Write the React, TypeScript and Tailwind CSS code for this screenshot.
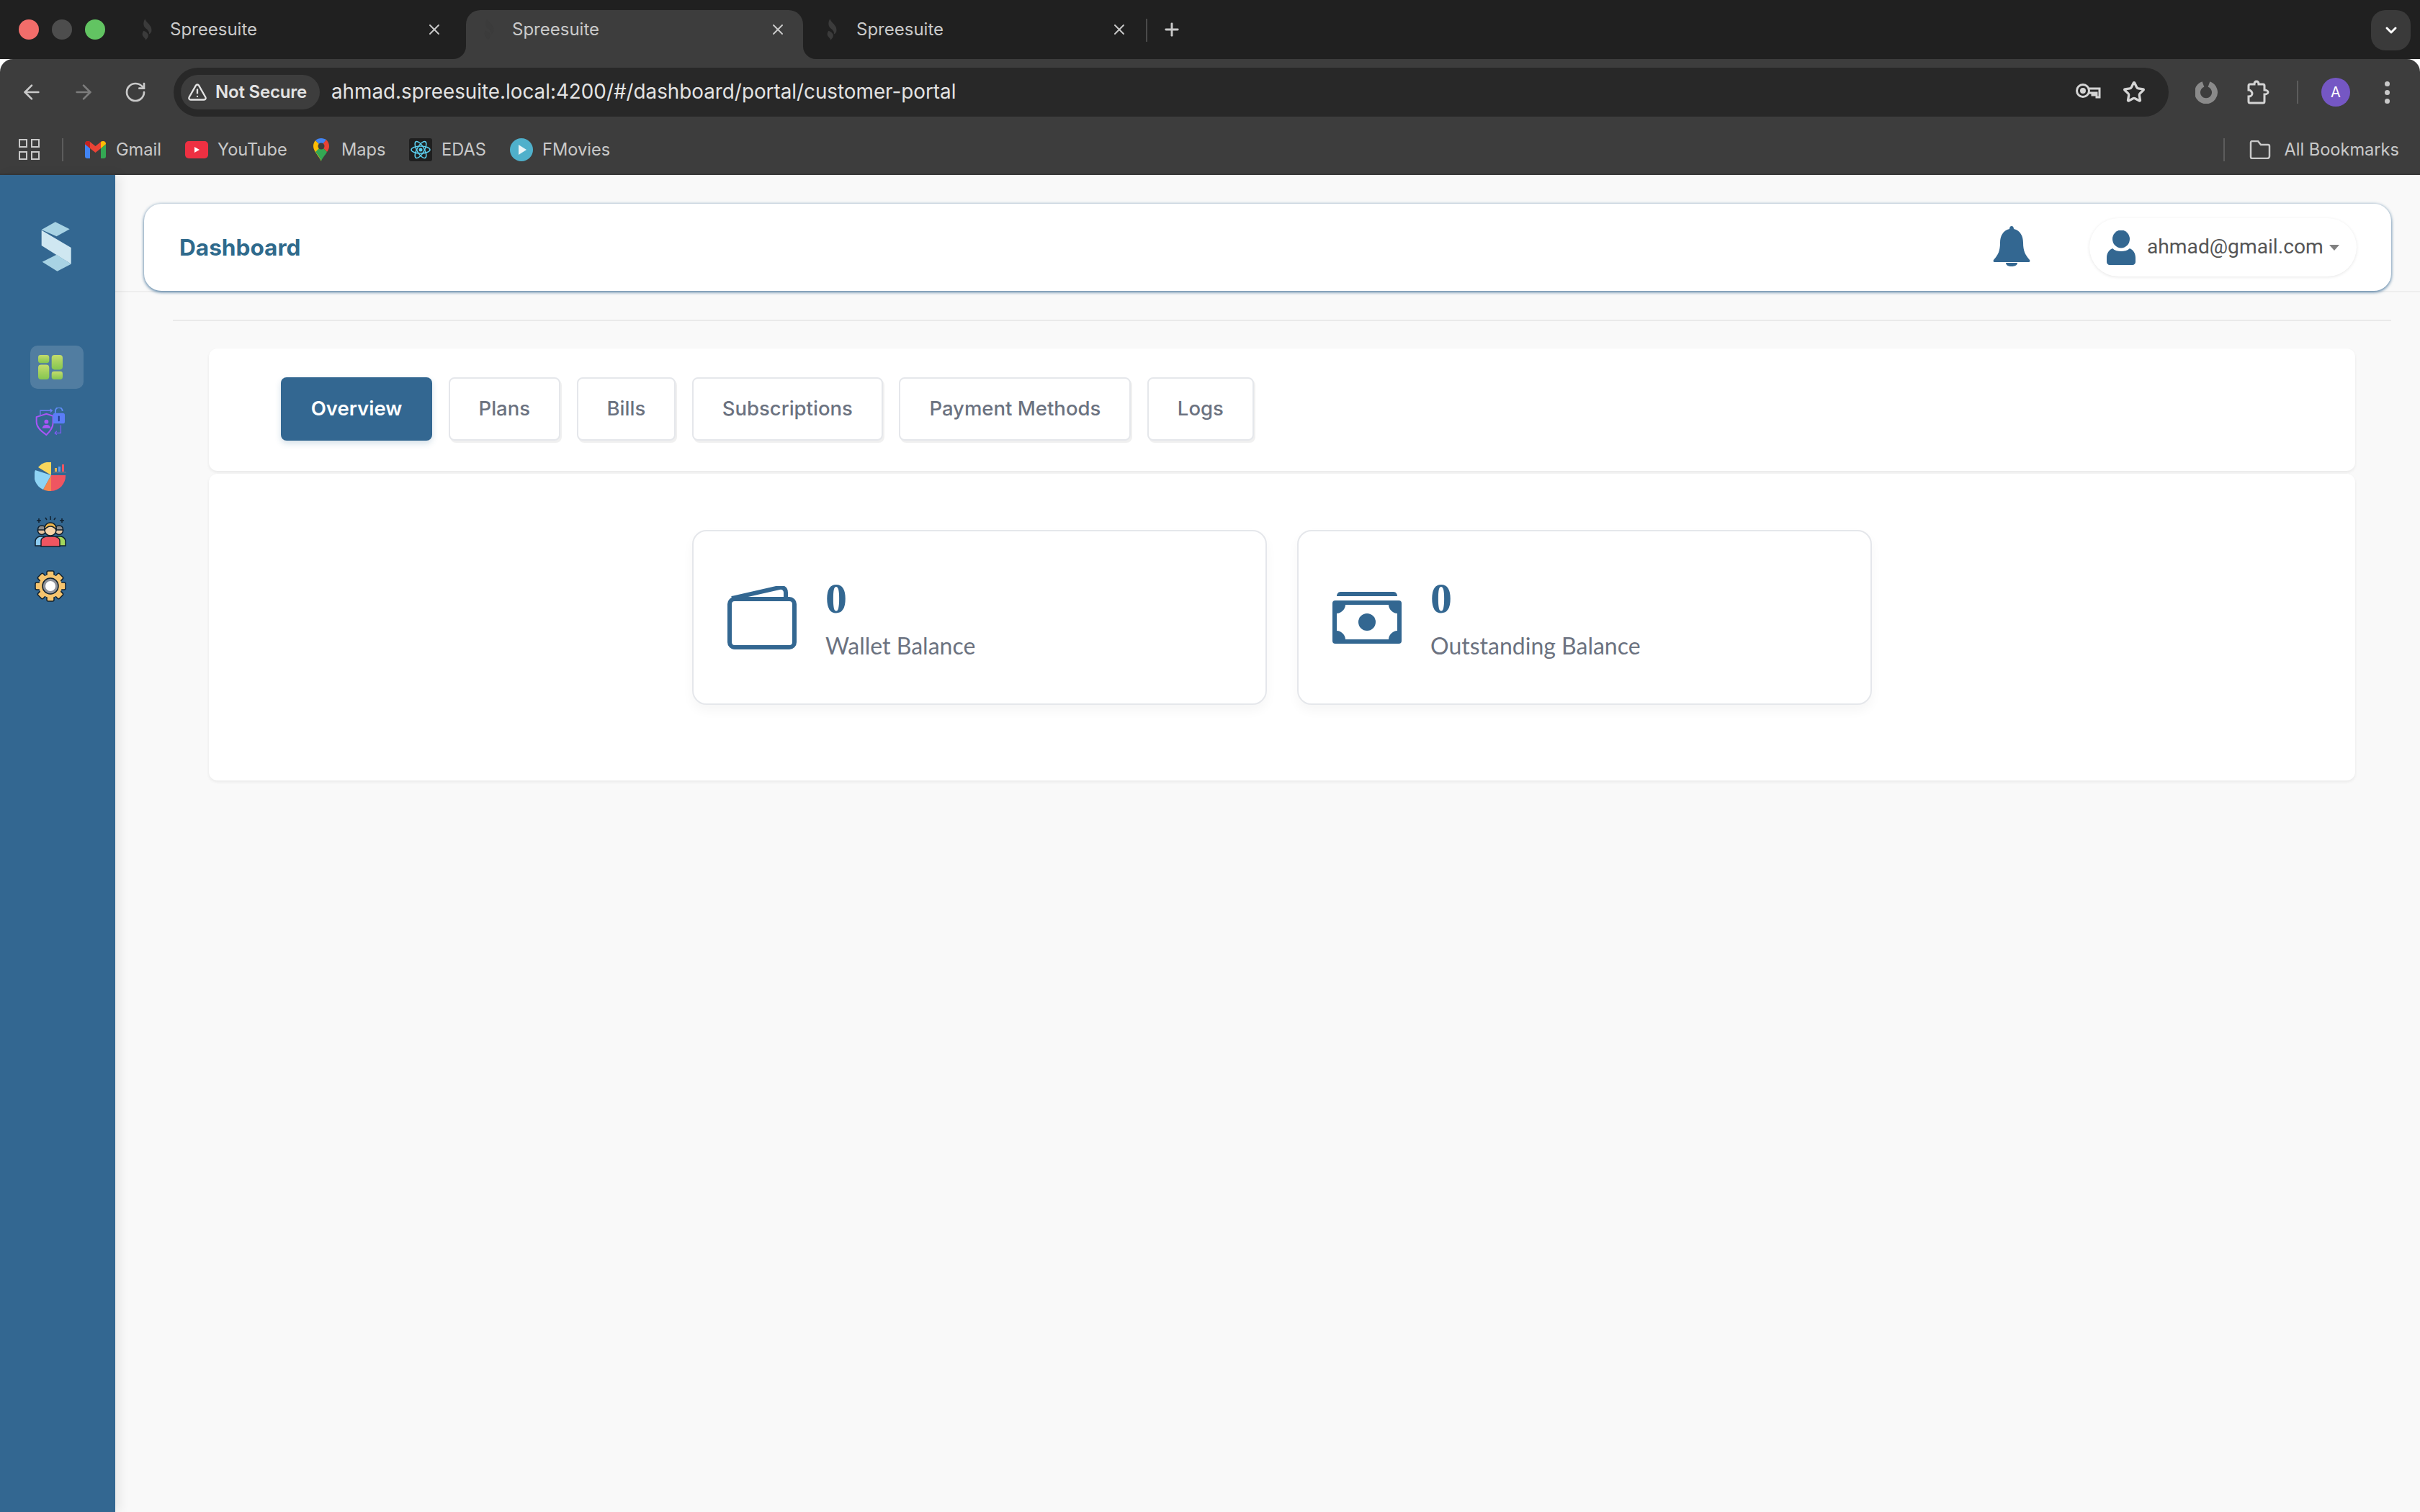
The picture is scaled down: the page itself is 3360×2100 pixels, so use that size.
import React from "react";
import { ArrowLeft, ArrowRight, ChevronDown, Plus, RotateCw, Star, TriangleAlert, X } from "lucide-react";

const Favicon = () => (
  <svg width="22" height="32" viewBox="0 0 24 32" className="shrink-0">
    <path
      d="M8 0c2 6 10 9 10 17 0 3-2 5-4 6 1-3-1-6-5-9C5 11 5 5 8 0zM6 18c3 1 7 4 7 7 0 3-2 5-4 7 0-3-5-5-5-9 0-2 1-4 2-5z"
      fill="#3b3b3b"
    />
  </svg>
);

const Ear = ({ side }: { side: "left" | "right" }) => (
  <svg
    width="18"
    height="18"
    viewBox="0 0 18 18"
    className={side === "left" ? "absolute bottom-0 left-[-18px]" : "absolute bottom-0 right-[-18px] -scale-x-100"}
  >
    <path d="M18 0V18H0A18 18 0 0 0 18 0Z" fill="#3d3d3d" />
  </svg>
);

const Gmail = () => (
  <svg width="29" height="24" viewBox="0 0 29 24" className="shrink-0">
    <path d="M0 4v17a3 3 0 0 0 3 3h4V10z" fill="#4285f4" />
    <path d="M29 4v17a3 3 0 0 1-3 3h-4V10z" fill="#34a853" />
    <path d="M0 4c0-4 4-5 7-3l7.500 6L22 1c3-2 7-1 7 3l-7 6-7.500 6L7 10z" fill="#ea4335" />
    <path d="M22 1c3-2 7-1 7 3l-7 6z" fill="#fbbc04" />
    <path d="M0 4c0-4 4-5 7-3v9z" fill="#c5221f" />
  </svg>
);

const YouTube = () => (
  <svg width="32" height="24" viewBox="0 0 32 24" className="shrink-0">
    <rect width="32" height="24" rx="5" fill="#ee3042" />
    <path d="M13 8l7 4-7 4z" fill="#fff" />
  </svg>
);

const MapsPin = () => (
  <svg width="22" height="32" viewBox="0 0 22 32" className="shrink-0">
    <path d="M11 32C8 25 0 18 0 11 0 8 1 5 3 3l8 8z" fill="#fbbc04" />
    <path d="M3 3c2-2 5-3 8-3 3 0 5 1 7 2l-7 9z" fill="#4285f4" />
    <path d="M18 2c2 2 4 5 4 9 0 3-1 5-3 8l-8-8z" fill="#ea4335" />
    <path d="M11 32c1-4 6-9 8-13l-8-8-8 8c3 4 7 9 8 13z" fill="#34a853" />
    <circle cx="11" cy="11" r="4.500" fill="#3d3d3d" />
  </svg>
);

const ReactIcon = () => (
  <svg width="32" height="32" viewBox="0 0 32 32" className="shrink-0">
    <rect width="32" height="32" rx="3" fill="#1f1f1f" />
    <g fill="none" stroke="#5ccfee" strokeWidth="1.500">
      <ellipse cx="16" cy="16" rx="13" ry="5" />
      <ellipse cx="16" cy="16" rx="13" ry="5" transform="rotate(60 16 16)" />
      <ellipse cx="16" cy="16" rx="13" ry="5" transform="rotate(120 16 16)" />
    </g>
    <circle cx="16" cy="16" r="2.500" fill="#5ccfee" />
  </svg>
);

const FMoviesIcon = () => (
  <svg width="32" height="32" viewBox="0 0 32 32" className="shrink-0">
    <circle cx="16" cy="16" r="16" fill="#4fb0cb" />
    <path d="M12 9l11 7-11 7z" fill="#e8f4f7" />
  </svg>
);

const Logo = () => (
  <svg width="43" height="71" viewBox="170 155 130 178" preserveAspectRatio="none">
    <path d="M230 158l60 25-55 25-63-23z" fill="#a8d3e4" />
    <path d="M172 187l124 61v57L172 240z" fill="#cfe7f1" />
    <path d="M175 297l60-25 61 33-58 25z" fill="#a8d3e4" />
  </svg>
);

const DashIcon = () => (
  <svg width="34" height="34" viewBox="100 70 100 100">
    <defs>
      <linearGradient id="dashGrad" x1="0" y1="0" x2="0" y2="1">
        <stop offset="0" stopColor="#c4dc6c" />
        <stop offset="1" stopColor="#84c650" />
      </linearGradient>
    </defs>
    <rect x="100" y="70" width="45" height="33" rx="10" fill="url(#dashGrad)" />
    <rect x="100" y="110" width="45" height="60" rx="12" fill="url(#dashGrad)" />
    <rect x="155" y="70" width="45" height="60" rx="12" fill="url(#dashGrad)" />
    <rect x="155" y="137" width="45" height="33" rx="10" fill="url(#dashGrad)" />
  </svg>
);

const ShieldIcon = () => (
  <svg width="42" height="40" viewBox="87 287 128 122">
    <path d="M92 327l42-13 28 9v30c0 20-16 38-28 50-14-10-42-28-42-55z" fill="none" stroke="#a855f7" strokeWidth="6" />
    <circle cx="134" cy="347" r="9" fill="#a855f7" />
    <path d="M116 375c2-11 10-15 18-15s16 4 18 15z" fill="#a855f7" />
    <path d="M108 318v-18h50m-8-7l8 7-8 7" fill="none" stroke="#6d7cf5" strokeWidth="4" />
    <path d="M172 311v-9a15 15 0 0 1 30 0" fill="none" stroke="#5f8cf8" strokeWidth="6" />
    <rect x="162" y="311" width="50" height="44" rx="8" fill="#5b7df7" />
    <rect x="184" y="322" width="6" height="24" rx="3" fill="#1e3a8a" />
    <path d="M195 362v33h-24m7-8l-8 8 8 7" fill="none" stroke="#7c5cf0" strokeWidth="4" />
  </svg>
);

const PieIcon = () => (
  <svg width="44" height="40" viewBox="0 0 44 40">
    <path d="M23 18V0A20 20 0 0 0 5 7z" fill="#f9d65c" />
    <path d="M23 18L1 11a21 21 0 0 0 11 27z" fill="#8fd4f5" />
    <path d="M23 18L12 38a21 21 0 0 0 11 2z" fill="#f5864f" />
    <path d="M23 18h20a21 21 0 0 1-20 22z" fill="#ef5561" />
    <rect x="28" y="8" width="3" height="5" fill="#e8b24c" />
    <rect x="33" y="6" width="3" height="7" fill="#5b9bf0" />
    <rect x="38" y="3" width="3" height="10" fill="#ef5561" />
    <rect x="26" y="13" width="18" height="2" fill="#54708c" />
  </svg>
);

const PeopleIcon = () => (
  <svg width="44" height="44" viewBox="0 0 44 44">
    <g stroke="#10202e" strokeWidth="1.500">
      <path d="M1 42v-6c0-4 3-6 6-7h6v13z" fill="#8ccbf0" />
      <path d="M43 42v-6c0-4-3-6-6-7h-6v13z" fill="#a3d65c" />
      <circle cx="10" cy="21" r="5.500" fill="#e8c4a0" />
      <path d="M4.500 20c0-4 2-6 5.500-6s5.500 2 5.500 6z" fill="#8b8b8b" />
      <circle cx="34" cy="21" r="5.500" fill="#e8c4a0" />
      <path d="M28.500 20c0-4 2-6 5.500-6s5.500 2 5.500 6z" fill="#8b8b8b" />
      <path d="M9 43v-8c0-3 3-5 7-6h12c4 1 7 3 7 6v8z" fill="#ef5561" />
      <circle cx="22" cy="20" r="8" fill="#f8d4a8" />
      <path d="M14 20c-1-6 3-10 8-10s9 4 8 10c-2-3-4-5-8-5s-6 2-8 5z" fill="#eeb64c" />
    </g>
    <path d="M22 1v5M15 3l2 3M29 3l-2 3M6 4v6M3 7h6M38 4v6M35 7h6" stroke="#10202e" strokeWidth="1.500" />
  </svg>
);

const GearIcon = () => (
  <svg width="44" height="44" viewBox="0 0 44 44">
    <g fill="#f6c56f" stroke="#10202e" strokeWidth="1.500" strokeLinejoin="round">
      <rect x="17" y="1" width="10" height="42" rx="2" />
      <rect x="17" y="1" width="10" height="42" rx="2" transform="rotate(45 22 22)" />
      <rect x="17" y="1" width="10" height="42" rx="2" transform="rotate(90 22 22)" />
      <rect x="17" y="1" width="10" height="42" rx="2" transform="rotate(135 22 22)" />
    </g>
    <circle cx="22" cy="22" r="16" fill="#f6c56f" />
    <circle cx="22" cy="22" r="11" fill="#8f9299" stroke="#10202e" strokeWidth="1.500" />
    <circle cx="22" cy="22" r="7" fill="#fff" />
  </svg>
);

const Bell = () => (
  <svg width="52" height="56" viewBox="0 0 52 56">
    <path
      d="M26 0c2 0 3 2 3 4 9 2 13 10 13 19 0 12 3 17 9 24 1 2 0 3-2 3H3c-2 0-3-1-2-3 6-7 9-12 9-24 0-9 4-17 13-19 0-2 1-4 3-4z"
      fill="#336791"
    />
    <path d="M18 51h16c0 3-3 5-8 5s-8-2-8-5z" fill="#336791" />
  </svg>
);

const UserIcon = () => (
  <svg width="40" height="48" viewBox="0 0 40 48" className="shrink-0">
    <ellipse cx="20" cy="12" rx="12" ry="12.500" fill="#336791" />
    <path
      d="M8 25c3 3 8 4 12 4s9-1 12-4c5 2 8 7 8 13v6c0 2-2 4-4 4H4c-2 0-4-2-4-4v-6c0-6 3-11 8-13z"
      fill="#336791"
    />
  </svg>
);

const WalletIcon = () => (
  <svg width="96" height="88" viewBox="0 0 96 88" className="shrink-0">
    <rect x="3" y="18" width="90" height="67" rx="7" fill="none" stroke="#336791" strokeWidth="6" />
    <path d="M6 17L72 2c4-1 9 1 9 7v8" fill="none" stroke="#336791" strokeWidth="6" />
  </svg>
);

const MoneyIcon = () => (
  <svg width="96" height="72" viewBox="0 0 96 72" className="shrink-0">
    <path d="M6 6c0-3 2-6 5-6h74c3 0 5 3 5 6z" fill="#336791" />
    <rect y="12" width="96" height="60" rx="4" fill="#336791" />
    <path d="M18 18h60c0 6 6 12 12 12v24c-6 0-12 6-12 12H18c0-6-6-12-12-12V30c6 0 12-6 12-12z" fill="#fff" />
    <circle cx="48" cy="42" r="12" fill="#336791" />
  </svg>
);

const tabs = ["Overview", "Plans", "Bills", "Subscriptions", "Payment Methods", "Logs"];
const bookmarkText = "text-[23.6px] leading-none text-[#c9c9c9]";

const TabStrip = () => (
  <div className="flex h-[82px] items-start bg-[#202020] text-[24px] leading-none text-[#c9c9c9]">
    <div className="ml-[26px] mt-[27px] flex gap-[18px]">
      <span className="h-7 w-7 rounded-full bg-[#f26d6a]" />
      <span className="h-7 w-7 rounded-full bg-[#4d4d4d]" />
      <span className="h-7 w-7 rounded-full bg-[#62c462]" />
    </div>
    <div className="ml-[48px] mt-[14px] flex h-[54px] w-[453px] items-center">
      <Favicon />
      <span className="ml-[20px]">Spreesuite</span>
      <X className="ml-auto mr-[32px] h-6 w-6" strokeWidth={2} />
    </div>
    <div className="relative mt-[14px] flex h-[68px] w-[468px] items-start rounded-t-[20px] bg-[#3d3d3d] pl-[22px] pt-0">
      <Ear side="left" />
      <Ear side="right" />
      <div className="flex h-[54px] w-full items-center">
        <Favicon />
        <span className="ml-[20px]">Spreesuite</span>
        <X className="ml-auto mr-[23px] h-6 w-6" strokeWidth={2} />
      </div>
    </div>
    <div className="ml-[30px] mt-[14px] flex h-[54px] w-[446px] items-center">
      <Favicon />
      <span className="ml-[22px]">Spreesuite</span>
      <X className="ml-auto mr-[25px] h-6 w-6" strokeWidth={2} />
    </div>
    <span className="mt-[26px] h-[32px] w-[2px] bg-[#4a4a4a]" />
    <Plus className="ml-[20px] mt-[27px] h-7 w-7" strokeWidth={2.5} />
    <div className="ml-auto mr-[13px] mt-[14px] flex h-[56px] w-[55px] items-center justify-center rounded-[20px] bg-[#3a3a3a]">
      <ChevronDown className="h-6 w-6 text-white" strokeWidth={3} />
    </div>
  </div>
);

const Toolbar = () => (
  <div className="flex h-[88px] items-center rounded-t-[18px] bg-[#3d3d3d] pt-[4px]">
    <ArrowLeft className="ml-[28px] h-8 w-8 text-[#c9c9c9]" strokeWidth={2} />
    <ArrowRight className="ml-[40px] h-8 w-8 text-[#7c7c7c]" strokeWidth={2} />
    <RotateCw className="ml-[40px] h-8 w-8 text-[#c9c9c9]" strokeWidth={2} />
    <div className="ml-[37px] flex h-[68px] w-[2770px] items-center rounded-full bg-[#282828] pl-[10px] pr-[32px]">
      <div className="flex h-[48px] w-[193px] items-center rounded-full bg-[#3d3d3d] pl-[9px]">
        <TriangleAlert className="h-7 w-7 text-[#e3e3e3]" strokeWidth={2} />
        <span className="ml-[11px] text-[24px] font-semibold leading-none tracking-[-0.2px] text-[#e3e3e3]">Not Secure</span>
      </div>
      <span className="ml-[16px] text-[27.8px] leading-none text-[#e3e3e3]">ahmad.spreesuite.local:4200/#/dashboard/portal/customer-portal</span>
      <svg width="36" height="26" viewBox="0 0 36 26" className="ml-auto" fill="none" stroke="#d4d4d4" strokeWidth="3">
        <circle cx="11" cy="11" r="8.500" />
        <circle cx="11" cy="11" r="2.500" fill="#d4d4d4" />
        <path d="M20 8h14v12h-4v-6h-3v3h-3v-3h-4" />
      </svg>
      <Star className="ml-[30px] h-8 w-8 text-[#d4d4d4]" strokeWidth={2.5} />
    </div>
    <svg width="32" height="32" viewBox="0 0 32 32" className="ml-[37px]" fill="none">
      <path d="M19 5A12 12 0 1 1 11 5" stroke="#8a8a8a" strokeWidth="8" />
    </svg>
    <svg width="32" height="34" viewBox="0 0 32 34" className="ml-[40px]" fill="none" stroke="#d4d4d4" strokeWidth="3">
      <path d="M4 6h6c0-2 1-4 3-4s3 2 3 4h6a2 2 0 0 1 2 2v6c2 0 5 1 5 3s-3 3-5 3v10a2 2 0 0 1-2 2H4a2 2 0 0 1-2-2v-7c3 0 5-2 5-4s-2-5-5-5V8a2 2 0 0 1 2-2z" />
    </svg>
    <span className="ml-[37px] h-[32px] w-[2px] bg-[#5c5c5c]" />
    <div className="ml-[32px] flex h-10 w-10 items-center justify-center rounded-full bg-[#7557c4] text-[20px] leading-none text-white">A</div>
    <div className="ml-[48px] flex flex-col gap-[5px]">
      <span className="h-[7px] w-[7px] rounded-full bg-[#c9c9c9]" />
      <span className="h-[7px] w-[7px] rounded-full bg-[#c9c9c9]" />
      <span className="h-[7px] w-[7px] rounded-full bg-[#c9c9c9]" />
    </div>
  </div>
);

const BookmarksBar = () => (
  <div className="flex h-[73px] items-center border-b-2 border-[#363636] bg-[#3d3d3d] pt-[4px]">
    <div className="ml-[26px] grid grid-cols-2 gap-[5px]">
      <span className="h-[12px] w-[12px] border-2 border-[#c9c9c9]" />
      <span className="h-[12px] w-[12px] border-2 border-[#c9c9c9]" />
      <span className="h-[12px] w-[12px] border-2 border-[#c9c9c9]" />
      <span className="h-[12px] w-[12px] border-2 border-[#c9c9c9]" />
    </div>
    <span className="ml-[31px] h-[32px] w-[2px] bg-[#5c5c5c]" />
    <div className="ml-[30px]"><Gmail /></div>
    <span className={`ml-[14px] w-[63px] ${bookmarkText}`}>Gmail</span>
    <div className="ml-[33px]"><YouTube /></div>
    <span className={`ml-[13px] w-[92px] ${bookmarkText}`}>YouTube</span>
    <div className="ml-[41px]"><MapsPin /></div>
    <span className={`ml-[17px] w-[59px] ${bookmarkText}`}>Maps</span>
    <div className="ml-[35px]"><ReactIcon /></div>
    <span className={`ml-[13px] w-[61px] ${bookmarkText}`}>EDAS</span>
    <div className="ml-[34px]"><FMoviesIcon /></div>
    <span className={`ml-[13px] ${bookmarkText}`}>FMovies</span>
    <span className="ml-auto h-[32px] w-[2px] bg-[#5c5c5c]" />
    <svg width="30" height="26" viewBox="0 0 30 26" className="ml-[34px]" fill="none" stroke="#c9c9c9" strokeWidth="2.500">
      <path d="M2 3a2 2 0 0 1 2-2h8l4 5h10a2 2 0 0 1 2 2v14a3 3 0 0 1-3 3H4a2 2 0 0 1-2-2z" />
    </svg>
    <span className={`ml-[18px] mr-[29px] ${bookmarkText}`}>All Bookmarks</span>
  </div>
);

const Sidebar = () => (
  <aside className="z-10 flex w-[160px] shrink-0 flex-col bg-[#336791] shadow-[6px_0_14px_rgba(0,0,0,0.08)]">
    <div className="ml-[57px] mt-[64px]"><Logo /></div>
    <div className="ml-[42px] mt-[102px] flex flex-col gap-[16px]">
      <div className="flex h-[60px] w-[74px] items-center rounded-[10px] bg-white/15 pl-[11px]"><DashIcon /></div>
      <div className="flex h-[60px] items-center pl-[7px]"><ShieldIcon /></div>
      <div className="flex h-[60px] items-center pl-[6px]"><PieIcon /></div>
      <div className="flex h-[60px] items-center pl-[6px]"><PeopleIcon /></div>
      <div className="flex h-[60px] items-center pl-[6px]"><GearIcon /></div>
    </div>
  </aside>
);

const Header = () => (
  <div className="h-[163px] border-b-2 border-[#eeeeee] pl-[40px] pr-[40px] pt-[40px]">
    <div className="flex h-[121px] items-center rounded-[24px] bg-white pl-[49px] shadow-[0_2px_4px_rgba(51,103,145,0.7),0_0_4px_rgba(51,103,145,0.35)]">
      <h1 className="text-[31.6px] font-bold leading-none text-[#2f6a8c]">Dashboard</h1>
      <div className="ml-auto mb-[3px]"><Bell /></div>
      <div className="ml-[82px] mr-[48px] flex h-[81px] w-[371px] items-center rounded-full bg-white pl-[24px] shadow-[0_1px_4px_rgba(0,0,0,0.1)]">
        <UserIcon />
        <span className="ml-[16px] font-['Roboto',sans-serif] text-[28.2px] leading-none text-[#555555]">ahmad@gmail.com</span>
        <span className="ml-[8px] h-0 w-0 border-x-[7px] border-t-[8px] border-x-transparent border-t-[#808080]" />
      </div>
    </div>
  </div>
);

const BalanceCard = ({ icon, label }: { icon: React.ReactNode; label: string }) => (
  <div className="flex h-[243px] w-[798px] items-center rounded-[20px] border-2 border-[#e5e7eb] bg-white pl-[47px] shadow-[0_8px_16px_rgba(0,0,0,0.04)]">
    {icon}
    <div className="ml-[40px] flex flex-col">
      <span className="font-['Liberation_Serif',serif] text-[60px] font-bold leading-[56px] text-[#336791]">0</span>
      <span className="mt-[22px] font-['Lato',sans-serif] text-[32px] leading-none text-[#6b7280]">{label}</span>
    </div>
  </div>
);

export default function App() {
  return (
    <div className="flex h-screen w-full flex-col overflow-hidden font-['Inter',sans-serif]">
      <TabStrip />
      <Toolbar />
      <BookmarksBar />
      <div className="flex flex-1 bg-[#f9f9f9]">
        <Sidebar />
        <main className="flex-1">
          <Header />
          <div className="ml-[80px] mr-[40px] mt-[38px] h-[2px] bg-[#eaeaea]" />
          <div className="ml-[130px] mr-[90px] mt-[38px]">
            <div className="flex h-[170px] items-start gap-[22.5px] rounded-[12px] bg-white pl-[100px] pt-[40px] shadow-[0_2px_4px_rgba(0,0,0,0.07)]">
              {tabs.map((tab, index) =>
                index === 0 ? (
                  <button key={tab} className="h-[88px] w-[210px] rounded-[8px] bg-[#336791] text-[27.5px] font-semibold leading-none text-white shadow-[0_4px_8px_rgba(51,103,145,0.2)]">
                    {tab}
                  </button>
                ) : (
                  <button key={tab} className="h-[88px] rounded-[8px] border-2 border-[#e5e7eb] bg-white px-[40px] text-[27.5px] font-medium leading-none text-[#6b7280] shadow-[2px_3px_0_rgba(0,0,0,0.06)]">
                    {tab}
                  </button>
                )
              )}
            </div>
            <div className="mt-[4px] flex h-[426px] justify-center gap-[42px] rounded-[12px] bg-white pt-[78px] shadow-[0_2px_4px_rgba(0,0,0,0.07)]">
              <BalanceCard icon={<WalletIcon />} label="Wallet Balance" />
              <BalanceCard icon={<MoneyIcon />} label="Outstanding Balance" />
            </div>
          </div>
        </main>
      </div>
    </div>
  );
}
